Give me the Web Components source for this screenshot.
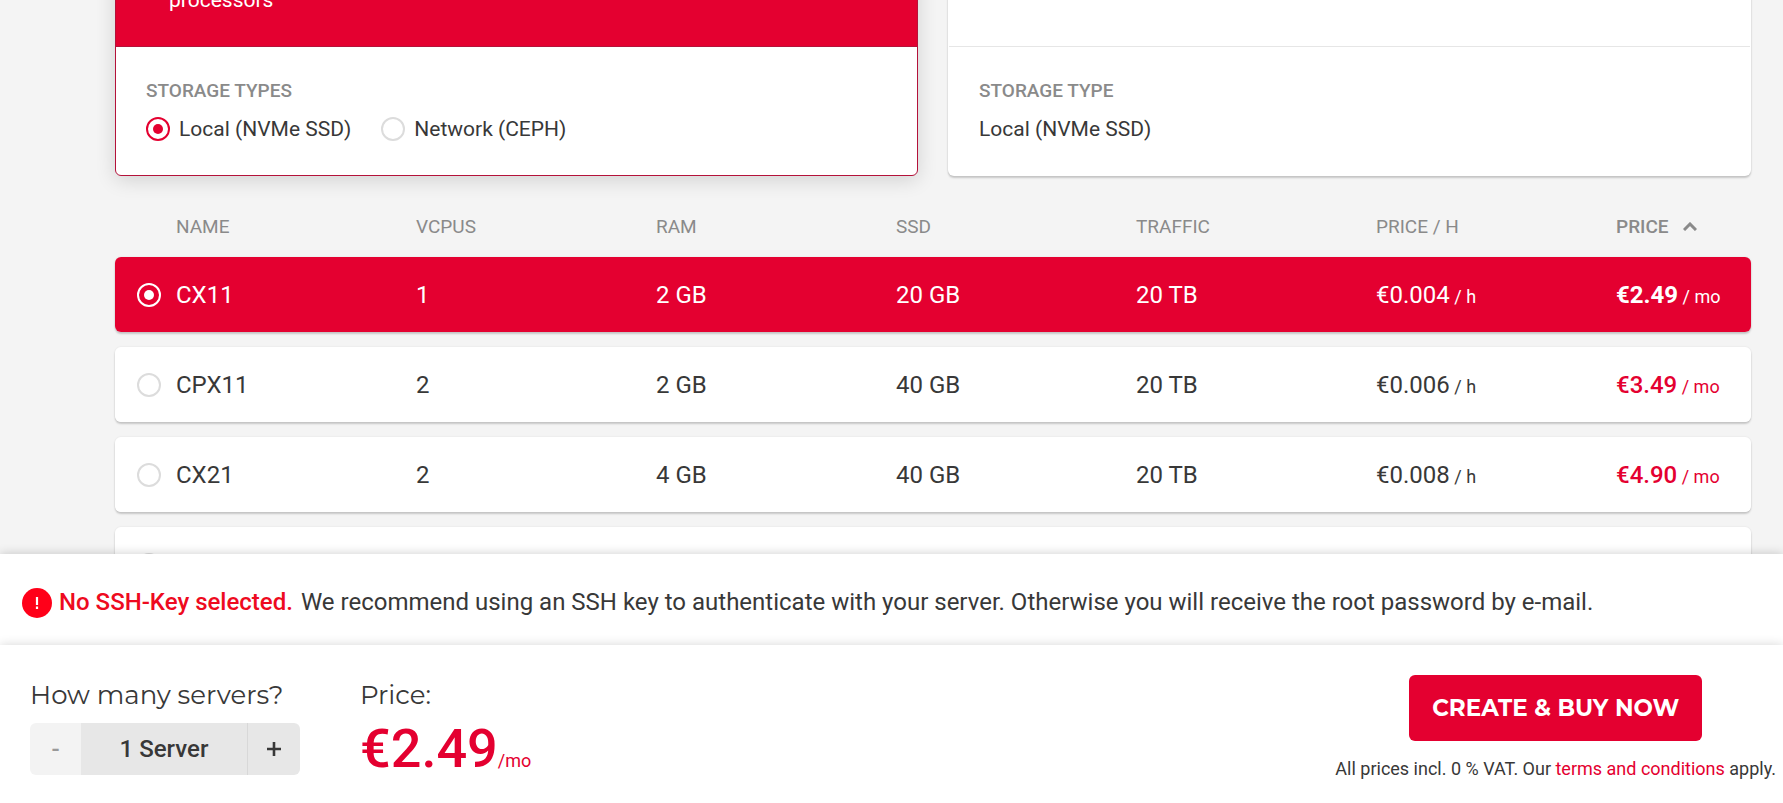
<!DOCTYPE html>
<html lang="en">
<head>
<meta charset="utf-8">
<title>Create a server</title>
<style>
  :root {
    --brand: #e40030;
    --text: #383838;
    --muted: #8a8a8a;
    --line: #dcdcdc;
    --radius: 6px;
    --heading: "Montserrat", "Inter", sans-serif;
  }
  body {
    margin: 0;
    background: #f4f4f4;
    color: var(--text);
    font-family: "Roboto", "Liberation Sans", sans-serif;
  }
</style>
</head>
<body>
<server-configurator></server-configurator>

<template id="radio-css">
  <style>
    input[type="radio"] {
      appearance: none;
      flex: none;
      box-sizing: border-box;
      width: 24px;
      height: 24px;
      margin: 0;
      border: 2px solid var(--line);
      border-radius: 50%;
      display: grid;
      place-items: center;
      background: transparent;
    }
    input[type="radio"]:checked { border-color: var(--dot, var(--brand)); }
    input[type="radio"]:checked::before {
      content: "";
      width: 10px;
      height: 10px;
      border-radius: 50%;
      background: var(--dot, var(--brand));
    }
  </style>
</template>

<template id="server-configurator">
  <style>
    :host { display: flex; flex-direction: column; height: 100vh; }
    main { flex: 1; min-height: 0; overflow: hidden; padding: 0 32px 0 115px; }
    .page { margin-top: -42px; }
    .cards { display: grid; grid-template-columns: 1fr 1fr; gap: 30px; }
    footer { position: relative; }
  </style>
  <main>
    <div class="page">
      <section class="cards">
        <type-card selected heading="Storage types">
          <span slot="summary">processors</span>
          <storage-options></storage-options>
        </type-card>
        <type-card heading="Storage type">Local (NVMe SSD)</type-card>
      </section>
      <server-table></server-table>
    </div>
  </main>
  <footer>
    <key-notice>
      <strong slot="title">No SSH-Key selected.</strong>
      We recommend using an SSH key to authenticate with your server. Otherwise you will receive the root password by e-mail.
    </key-notice>
    <order-bar></order-bar>
  </footer>
</template>

<template id="type-card">
  <style>
    :host {
      display: flex;
      flex-direction: column;
      box-sizing: border-box;
      border-radius: var(--radius);
      background: #fff;
      box-shadow: 0 2px 2px rgba(0, 0, 0, .18), 0 0 2px rgba(0, 0, 0, .1);
      border: 1px solid transparent;
      overflow: hidden;
    }
    :host([selected]) {
      border-color: #b4123a;
      box-shadow: 0 4px 20px rgba(0, 0, 0, .14);
    }
    .summary {
      box-sizing: border-box;
      height: 88px;
      padding: 25px 53px 0;
      border-bottom: 1px solid #e6e6e6;
      font-size: 21px;
      line-height: 32px;
    }
    :host([selected]) .summary {
      background: var(--brand);
      border-color: #b4123a;
      color: #fff;
    }
    .storage { padding: 30px 30px 32px; }
    h3 {
      margin: 0 0 10px;
      font-size: 19px;
      line-height: 28px;
      font-weight: 500;
      text-transform: uppercase;
      color: var(--muted);
    }
    .value { font-size: 21px; line-height: 28px; }
  </style>
  <div class="summary"><slot name="summary"></slot></div>
  <div class="storage">
    <h3></h3>
    <div class="value"><slot></slot></div>
  </div>
</template>

<template id="storage-options">
  <style>
    :host { display: flex; gap: 30px; }
    label { display: flex; align-items: center; gap: 9px; }
  </style>
  <label><input type="radio" name="storage" checked>Local (NVMe SSD)</label>
  <label><input type="radio" name="storage">Network (CEPH)</label>
</template>

<template id="server-table">
  <style>
    :host { display: block; margin-top: 20px; }
    table { width: 100%; table-layout: fixed; border-collapse: separate; border-spacing: 0 15px; }
    .pick { width: 61px; }
    .last { width: 135px; }
    th, td { padding: 0; text-align: left; font-weight: 400; }
    thead th {
      height: 31px;
      font-size: 19px;
      line-height: 31px;
      text-transform: uppercase;
      color: var(--muted);
    }
    thead button {
      display: flex;
      align-items: center;
      gap: 14px;
      padding: 0;
      border: 0;
      background: none;
      font: inherit;
      font-weight: 500;
      text-transform: inherit;
      color: inherit;
    }
    tbody tr {
      border-radius: var(--radius);
      box-shadow: 0 2px 2px rgba(0, 0, 0, .18), 0 0 2px rgba(0, 0, 0, .1);
    }
    tbody td { height: 75px; background: #fff; font-size: 24px; line-height: 28px; white-space: nowrap; }
    tbody td:first-child { border-radius: var(--radius) 0 0 var(--radius); padding-left: 22px; }
    tbody td:last-child { border-radius: 0 var(--radius) var(--radius) 0; color: var(--brand); }
    small { font-size: 18px; line-height: 18px; }
    b { font-weight: 500; }
    tr.selected { --dot: #fff; }
    tr.selected td, tr.selected td:last-child { background: var(--brand); color: #fff; }
    tr.selected b { font-weight: 700; }
  </style>
  <table>
    <colgroup><col class="pick"><col><col><col><col><col><col><col class="last"></colgroup>
    <thead>
      <tr>
        <th></th><th>Name</th><th>vCPUs</th><th>RAM</th><th>SSD</th><th>Traffic</th><th>Price / h</th>
        <th aria-sort="ascending"><button type="button">Price
          <svg width="14" height="9" viewBox="0 0 14 9" fill="none" stroke="currentColor" stroke-width="3" aria-hidden="true"><path d="M1 8 7 2l6 6"/></svg>
        </button></th>
      </tr>
    </thead>
    <tbody></tbody>
  </table>
</template>

<template id="key-notice">
  <style>
    :host {
      display: flex;
      align-items: center;
      box-sizing: border-box;
      padding: 33px 22px 27px;
      background: #fff;
      box-shadow: 0 0 10px rgba(0, 0, 0, .2);
      font-size: 24px;
      line-height: 31px;
    }
    svg { flex: none; margin-right: 7px; }
    ::slotted(strong) { flex: none; margin-right: 8px; font-weight: 500; color: #ee0a20; }
  </style>
  <svg width="30" height="30" viewBox="0 0 30 30" role="img" aria-label="Warning">
    <circle cx="15" cy="15" r="15" fill="#ff0019"/>
    <path d="M15 9v8M15 18.6v2.4" stroke="#fff" stroke-width="2.2"/>
  </svg>
  <slot name="title"></slot><span><slot></slot></span>
</template>

<template id="order-bar">
  <style>
    :host {
      position: relative;
      display: flex;
      justify-content: space-between;
      box-sizing: border-box;
      padding: 30px 7px 16px 30px;
      background: #fff;
      box-shadow: 0 0 10px rgba(0, 0, 0, .16);
    }
    .fields { display: flex; gap: 60px; }
    h3 { margin: 0 0 8px; font: 400 26px/40px var(--heading); }
    .price { display: flex; align-items: baseline; color: var(--brand); font-size: 54px; line-height: 52px; font-weight: 500; }
    .price small { font-size: 18px; font-weight: 400; }
    .buy { display: flex; flex-direction: column; align-items: center; }
    .buy button {
      width: 293px;
      height: 66px;
      padding: 0;
      border: 0;
      border-radius: var(--radius);
      background: var(--brand);
      color: #fff;
      font: 700 23px/32px var(--heading);
      white-space: nowrap;
    }
    p { margin: 16px 0 0; font-size: 18px; line-height: 24px; }
    a { color: var(--brand); text-decoration: none; }
  </style>
  <div class="fields">
    <div><h3>How many servers?</h3><server-stepper></server-stepper></div>
    <div><h3>Price:</h3><div class="price">€2.49<small>/mo</small></div></div>
  </div>
  <div class="buy">
    <button type="button">CREATE &amp; BUY NOW</button>
    <p>All prices incl. 0 % VAT. Our <a href="#terms">terms and conditions</a> apply.</p>
  </div>
</template>

<template id="server-stepper">
  <style>
    :host { display: grid; grid-template-columns: 51px 166px 53px; height: 52px; border-radius: var(--radius); overflow: hidden; }
    button, output {
      display: grid;
      place-items: center;
      padding: 0;
      border: 0;
      background: #e7e7e7;
      color: var(--text);
      font: 500 24px/28px "Roboto", sans-serif;
    }
    button:disabled { background: #f3f3f3; color: #999; }
    button:last-child { border-left: 1px solid #d8d8d8; }
  </style>
  <button type="button" aria-label="Fewer servers" disabled>-</button>
  <output>1 Server</output>
  <button type="button" aria-label="More servers">
    <svg width="14" height="14" viewBox="0 0 14 14" stroke="currentColor" stroke-width="2.6" aria-hidden="true"><path d="M7 0v14M0 7h14"/></svg>
  </button>
</template>

<script>
  class TemplateElement extends HTMLElement {
    constructor() {
      super();
      const root = this.attachShadow({ mode: "open" });
      for (const id of this.constructor.templates) {
        root.append(document.getElementById(id).content.cloneNode(true));
      }
    }
  }

  class TypeCard extends TemplateElement {
    static templates = ["type-card"];
    connectedCallback() {
      this.shadowRoot.querySelector("h3").textContent = this.getAttribute("heading");
    }
  }

  class StorageOptions extends TemplateElement {
    static templates = ["radio-css", "storage-options"];
  }

  class ServerTable extends TemplateElement {
    static templates = ["radio-css", "server-table"];
    static plans = [
      ["CX11", 1, 2, 20, "0.004", "2.49"],
      ["CPX11", 2, 2, 40, "0.006", "3.49"],
      ["CX21", 2, 4, 40, "0.008", "4.90"],
      ["", "", "", "", "", ""]
    ];
    connectedCallback() {
      const body = this.shadowRoot.querySelector("tbody");
      body.innerHTML = ServerTable.plans.map(([name, cpus, ram, ssd, hour, month], i) => `
        <tr${i ? "" : ' class="selected"'}>
          <td><input type="radio" name="plan" id="plan-${i}" aria-label="${name || "More"}"${i ? "" : " checked"}></td>
          <td><label for="plan-${i}">${name}</label></td>
          <td>${cpus}</td>
          <td>${ram && ram + " GB"}</td>
          <td>${ssd && ssd + " GB"}</td>
          <td>${name && "20 TB"}</td>
          <td>${hour && `€${hour}<small> / h</small>`}</td>
          <td>${month && `<b>€${month}</b><small> / mo</small>`}</td>
        </tr>`).join("");
    }
  }

  class KeyNotice extends TemplateElement { static templates = ["key-notice"]; }
  class ServerStepper extends TemplateElement { static templates = ["server-stepper"]; }
  class OrderBar extends TemplateElement { static templates = ["order-bar"]; }
  class ServerConfigurator extends TemplateElement { static templates = ["server-configurator"]; }

  customElements.define("type-card", TypeCard);
  customElements.define("storage-options", StorageOptions);
  customElements.define("server-table", ServerTable);
  customElements.define("key-notice", KeyNotice);
  customElements.define("server-stepper", ServerStepper);
  customElements.define("order-bar", OrderBar);
  customElements.define("server-configurator", ServerConfigurator);
</script>
</body>
</html>
